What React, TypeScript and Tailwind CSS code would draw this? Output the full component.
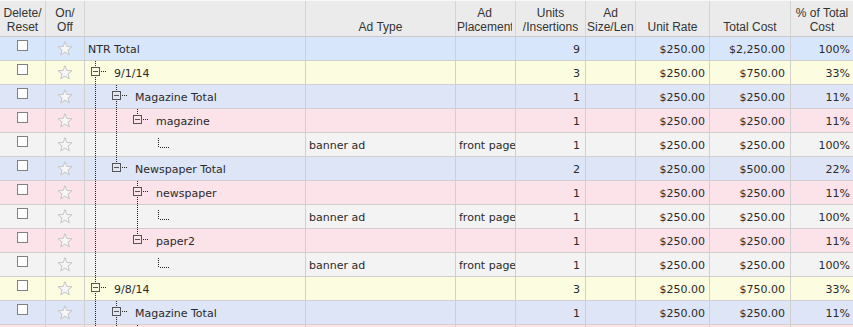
import React from 'react';

type Kind = 'ntr' | 'date' | 'total' | 'cat' | 'leaf';

interface GridRow {
  kind: Kind;
  level: number;
  label?: string;
  through: number[]; // x of ancestor dotted lines inside the tree cell
  below?: boolean;
  adType?: string;
  placement?: string;
  units: string;
  rate: string;
  cost: string;
  pct: string;
}

const rowBg: Record<Kind, string> = {
  ntr: 'bg-[#d8e6fc]',
  date: 'bg-[#fcfce1]',
  total: 'bg-[#dee5f6]',
  cat: 'bg-[#fbe3e9]',
  leaf: 'bg-[#f3f3f3]',
};

// box left edge and text indent per tree level
const boxX: Record<number, number> = { 1: 6, 2: 27, 3: 48 };
const textPad: Record<number, number> = { 0: 3, 1: 29, 2: 50, 3: 71 };

const rows: GridRow[] = [
  { kind: 'ntr', level: 0, label: 'NTR Total', through: [], units: '9', rate: '$250.00', cost: '$2,250.00', pct: '100%' },
  { kind: 'date', level: 1, label: '9/1/14', through: [], below: true, units: '3', rate: '$250.00', cost: '$750.00', pct: '33%' },
  { kind: 'total', level: 2, label: 'Magazine Total', through: [10], below: true, units: '1', rate: '$250.00', cost: '$250.00', pct: '11%' },
  { kind: 'cat', level: 3, label: 'magazine', through: [10, 31], units: '1', rate: '$250.00', cost: '$250.00', pct: '11%' },
  { kind: 'leaf', level: 4, through: [10, 31], adType: 'banner ad', placement: 'front page', units: '1', rate: '$250.00', cost: '$250.00', pct: '100%' },
  { kind: 'total', level: 2, label: 'Newspaper Total', through: [10], units: '2', rate: '$250.00', cost: '$500.00', pct: '22%' },
  { kind: 'cat', level: 3, label: 'newspaper', through: [10], below: true, units: '1', rate: '$250.00', cost: '$250.00', pct: '11%' },
  { kind: 'leaf', level: 4, through: [10, 52], adType: 'banner ad', placement: 'front page', units: '1', rate: '$250.00', cost: '$250.00', pct: '100%' },
  { kind: 'cat', level: 3, label: 'paper2', through: [10], units: '1', rate: '$250.00', cost: '$250.00', pct: '11%' },
  { kind: 'leaf', level: 4, through: [10], adType: 'banner ad', placement: 'front page', units: '1', rate: '$250.00', cost: '$250.00', pct: '100%' },
  { kind: 'date', level: 1, label: '9/8/14', through: [], below: true, units: '3', rate: '$250.00', cost: '$750.00', pct: '33%' },
  { kind: 'total', level: 2, label: 'Magazine Total', through: [10], below: true, units: '1', rate: '$250.00', cost: '$250.00', pct: '11%' },
  { kind: 'cat', level: 3, label: 'magazine', through: [10, 31], units: '1', rate: '$250.00', cost: '$250.00', pct: '11%' },
];

const Star = () => (
  <svg width={16} height={15} viewBox="0 0 16 15" className="mx-auto mt-[4px] block">
    <polygon
      points="8,0.7 9.82,5.49 14.94,5.74 10.95,8.96 12.29,13.91 8,11.1 3.71,13.91 5.05,8.96 1.06,5.74 6.18,5.49"
      fill="#f6f6f6"
      stroke="#c6c6c6"
      strokeWidth={1}
      strokeLinejoin="round"
    />
  </svg>
);

const TreeLines: React.FC<{ row: GridRow }> = ({ row }) => {
  const leaf = row.kind === 'leaf';
  const w = leaf ? 85 : textPad[row.level];
  const bx = boxX[row.level] ?? 0;
  const lx = bx + 4;
  return (
    <svg width={w} height={23} className="shrink-0 block">
      <g stroke="#222" strokeWidth={1} strokeDasharray="1 1">
        {row.through.map(x => (
          <line key={x} x1={x + 0.5} y1={0} x2={x + 0.5} y2={23} />
        ))}
        {leaf ? (
          <>
            <line x1={73.5} y1={5} x2={73.5} y2={15} />
            <line x1={75} y1={14.5} x2={84} y2={14.5} />
          </>
        ) : (
          <>
            <line x1={lx + 0.5} y1={0} x2={lx + 0.5} y2={6} />
            {row.below && <line x1={lx + 0.5} y1={16} x2={lx + 0.5} y2={23} />}
            <line x1={bx + 10} y1={10.5} x2={bx + 15} y2={10.5} />
          </>
        )}
      </g>
      {!leaf && (
        <>
          <rect x={bx + 0.5} y={6.5} width={8} height={8} fill="none" stroke="#555" />
          <line x1={bx + 2} y1={10.5} x2={bx + 7} y2={10.5} stroke="#555" />
        </>
      )}
    </svg>
  );
};

const cell = 'shrink-0 border-r border-[#d0d0d0] overflow-hidden whitespace-nowrap flex items-center pt-[3px]';
const hcell = 'shrink-0 border-r border-[#d4d4d4] flex items-end justify-center text-center pb-[2px] overflow-hidden';

const GridRowView: React.FC<{ row: GridRow }> = ({ row }) => (
  <div className={`flex h-[24px] border-b border-[#cfcfcf] ${rowBg[row.kind]}`}>
    <div className="w-[46px] shrink-0 border-r border-[#d0d0d0]">
      <div className="mx-auto mt-[3px] h-[11px] w-[11px] border border-[#808080] bg-white" />
    </div>
    <div className="w-[39px] shrink-0 border-r border-[#d0d0d0]">
      <Star />
    </div>
    <div className="w-[221px] shrink-0 border-r border-[#d0d0d0] overflow-hidden whitespace-nowrap flex items-start">
      {row.level === 0 ? (
        <span className="self-center pl-[3px] pt-[3px]">{row.label}</span>
      ) : (
        <>
          <TreeLines row={row} />
          {row.label && <span className="self-center pt-[3px]">{row.label}</span>}
        </>
      )}
    </div>
    <div className={`w-[150px] pl-[3px] ${cell}`}>{row.adType}</div>
    <div className={`w-[60px] pl-[3px] ${cell}`}>{row.placement}</div>
    <div className={`w-[70px] justify-end pr-[5px] ${cell}`}>{row.units}</div>
    <div className={`w-[50px] ${cell}`} />
    <div className={`w-[74px] justify-end pr-[4px] ${cell}`}>{row.rate}</div>
    <div className={`w-[81px] justify-end pr-[5px] ${cell}`}>{row.cost}</div>
    <div className="w-[62px] shrink-0 flex items-center justify-end pr-[3px] pt-[3px] whitespace-nowrap">{row.pct}</div>
  </div>
);

export default function App() {
  return (
    <div className="w-[853px] h-[327px] overflow-hidden bg-white">
      <div className="flex h-[37px] border-t border-b border-t-[#f7f7f7] border-b-[#c9c9c9] bg-[#ebebeb] text-[12px] leading-[14px] text-[#333] font-['Liberation_Sans',Arial,sans-serif]">
        <div className={`w-[46px] ${hcell}`}>Delete/<br />Reset</div>
        <div className={`w-[39px] ${hcell}`}>On/<br />Off</div>
        <div className={`w-[221px] ${hcell}`} />
        <div className={`w-[150px] ${hcell}`}>Ad Type</div>
        <div className={`w-[60px] pl-[1px] pr-[3px] ${hcell}`}>
          <div className="w-full overflow-hidden whitespace-nowrap">Ad<br />Placement</div>
        </div>
        <div className={`w-[70px] ${hcell}`}>Units<br />/Insertions</div>
        <div className={`w-[50px] pl-[1px] pr-[1px] ${hcell}`}>
          <div className="w-full overflow-hidden whitespace-nowrap">Ad<br />Size/Length</div>
        </div>
        <div className={`w-[74px] ${hcell}`}>Unit Rate</div>
        <div className={`w-[81px] ${hcell}`}>Total Cost</div>
        <div className="w-[62px] shrink-0 flex items-end justify-center text-center pb-[2px]">% of Total<br />Cost</div>
      </div>
      <div className="text-[11px] text-[#2a2a2a] font-['DejaVu_Sans',Verdana,sans-serif]">
        {rows.map((row, i) => (
          <GridRowView key={i} row={row} />
        ))}
      </div>
    </div>
  );
}
